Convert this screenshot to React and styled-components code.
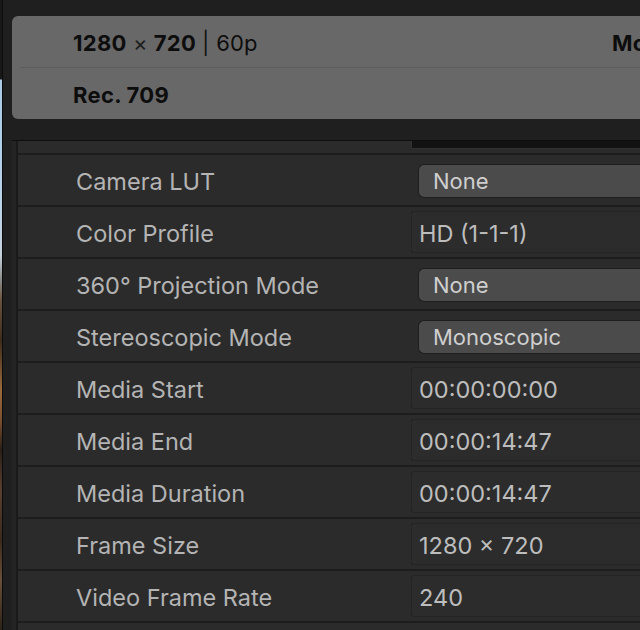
import React from "react";
import styled, { createGlobalStyle } from "styled-components";

const GlobalStyle = createGlobalStyle`
  html, body { margin: 0; padding: 0; background: #1f1f1f; overflow: hidden; }
  body { font-family: Inter, "Noto Sans", "Liberation Sans", sans-serif; -webkit-font-smoothing: antialiased; }
`;

const Page = styled.div`
  display: flex;
  width: 640px;
  height: 630px;
  overflow: hidden;
  background: #1f1f1f;
`;

const PhotoStrip = styled.div`
  flex: 0 0 2px;
  background: linear-gradient(
    to bottom,
    #181818 0px, #181818 79px,
    #a9c9e4 80px, #b7d3ea 200px, #c6d2dc 255px, #8a8a88 280px,
    #6a5440 300px, #3e2c1c 340px, #9a6a3c 390px, #7a5030 420px,
    #2a2018 450px, #5a4030 490px, #3a2a1c 540px, #6a5038 580px, #2c2218 630px
  );
`;

const EdgeLine = styled.div`
  flex: 0 0 1px;
  background: #0b0b0b;
`;

const Main = styled.div`
  flex: 1;
  min-width: 0;
  display: flex;
  flex-direction: column;
  padding: 16px 0 0 9px;
`;

const HeaderCard = styled.div`
  height: 103px;
  background: #686868;
  border-radius: 6px 0 0 6px;
  display: flex;
  flex-direction: column;
  overflow: hidden;
`;

const HeaderRow = styled.div`
  flex: 1;
  display: flex;
  align-items: center;
  margin-left: ${(p) => (p.$divided ? "8px" : "0")};
  padding-left: ${(p) => (p.$divided ? "53px" : "61px")};
  padding-top: 2px;
  border-top: ${(p) => (p.$divided ? "1px solid #5c5c5c" : "none")};
  font-size: 22px;
  color: #0d0d0d;
  white-space: nowrap;
`;

const Summary = styled.div`
  flex: 0 0 539px;
`;

const Strong = styled.span`
  font-weight: 700;
  letter-spacing: 0.3px;
`;

const Light = styled.span`
  font-weight: 400;
  color: ${(p) => (p.$dim ? "#1e1e1e" : "#0d0d0d")};
`;

const Bar = styled.span`
  font-weight: 400;
  color: #141414;
  margin: 0 7px 0 6px;
`;

const Inspector = styled.div`
  flex: 1;
  margin-top: 21px;
  display: flex;
  border-top: 1px solid #0e0e0e;
`;

const Gutter = styled.div`
  flex: 0 0 4px;
  background: #242424;
  border-right: 2px solid #1a1a1a;
`;

const Rows = styled.div`
  flex: 1;
  min-width: 0;
  display: flex;
  flex-direction: column;
  background: #2b2b2b;
`;

const Row = styled.div`
  display: grid;
  grid-template-columns: 393px 1fr;
  align-items: ${(p) => (p.$partial ? "start" : "center")};
  height: ${(p) => (p.$partial ? "12px" : "50px")};
  border-bottom: 2px solid #1d1d1d;
`;

const Label = styled.div`
  padding: 3px 0 0 58px;
  font-size: 23.5px;
  color: #b4b4b4;
  white-space: nowrap;
`;

const Field = styled.div`
  height: 42px;
  box-sizing: border-box;
  display: flex;
  align-items: center;
  padding: 3px 0 0 7px;
  border: 1px solid #242424;
  border-right: none;
  border-radius: 3px 0 0 3px;
  background: #2c2c2c;
  font-size: 23.5px;
  color: #bdbdbd;
  white-space: nowrap;
`;

const FieldTail = styled.div`
  height: 8px;
  box-sizing: border-box;
  background: #121212;
  border: 1px solid #323232;
  border-top: none;
  border-right: none;
  border-radius: 0 0 0 2px;
`;

const Popup = styled.div`
  height: 34px;
  box-sizing: border-box;
  margin: 1px 0 0 7px;
  display: flex;
  align-items: center;
  padding: 1px 0 0 14px;
  background: #4b4b4b;
  border: 1px solid #1e1e1e;
  border-right: none;
  border-radius: 6px 0 0 6px;
  font-size: 22px;
  color: #cfcfcf;
  white-space: nowrap;
`;

const rows = [
  { label: "Camera LUT", value: "None", popup: true },
  { label: "Color Profile", value: "HD (1-1-1)" },
  { label: "360° Projection Mode", value: "None", popup: true },
  { label: "Stereoscopic Mode", value: "Monoscopic", popup: true },
  { label: "Media Start", value: "00:00:00:00" },
  { label: "Media End", value: "00:00:14:47" },
  { label: "Media Duration", value: "00:00:14:47" },
  { label: "Frame Size", value: "1280 × 720" },
  { label: "Video Frame Rate", value: "240" },
];

export default function App() {
  return (
    <>
      <GlobalStyle />
      <Page>
        <PhotoStrip />
        <EdgeLine />
        <Main>
          <HeaderCard>
            <HeaderRow>
              <Summary>
                <Strong>1280</Strong>
                <Light $dim> × </Light>
                <Strong>720</Strong>
                <Bar>|</Bar>
                <Light>60p</Light>
              </Summary>
              <Strong>Mo</Strong>
            </HeaderRow>
            <HeaderRow $divided>
              <Strong>Rec. 709</Strong>
            </HeaderRow>
          </HeaderCard>
          <Inspector>
            <Gutter />
            <Rows>
              <Row $partial>
                <span />
                <FieldTail />
              </Row>
              {rows.map((r) => (
                <Row key={r.label}>
                  <Label>{r.label}</Label>
                  {r.popup ? <Popup>{r.value}</Popup> : <Field>{r.value}</Field>}
                </Row>
              ))}
            </Rows>
          </Inspector>
        </Main>
      </Page>
    </>
  );
}
